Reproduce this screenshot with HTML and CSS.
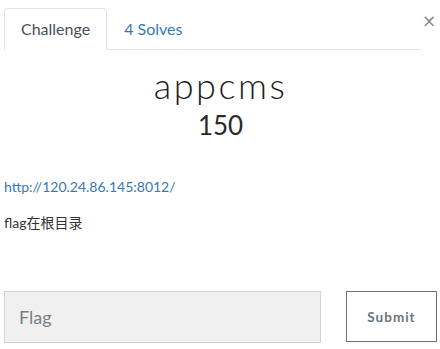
FILE: index.html
```html
<!DOCTYPE html>
<html>
<head>
<meta charset="utf-8">
<link rel="stylesheet" href="styles.css">
</head>
<body>
<div class="modal">
  <div class="header">
    <ul class="tabs">
      <li class="tab active">Challenge</li>
      <li class="tab">4 Solves</li>
    </ul>
    <button class="close">×</button>
  </div>
  <h2 class="title">appcms</h2>
  <h3 class="points">150</h3>
  <p class="desc"><a class="link" href="#">http://120.24.86.145:8012/</a></p>
  <p class="desc text">flag在根目录</p>
  <div class="form">
    <input class="flag" type="text" placeholder="Flag">
    <button class="submit">Submit</button>
  </div>
</div>
</body>
</html>
```

FILE: styles.css
```css
html, body {
  margin: 0;
  padding: 0;
  background: #fff;
}
body {
  font-family: Lato, "Noto Sans CJK SC", sans-serif;
  color: #212529;
}
.modal {
  padding: 8px 3px 0 4px;
}
.header {
  display: flex;
  align-items: flex-start;
}
.tabs {
  flex: 1;
  display: flex;
  list-style: none;
  margin: 0;
  padding: 0;
  border-bottom: 1px solid #dee2e6;
}
.tab {
  font-size: 16px;
  line-height: 24px;
  padding: 8px 16px;
  margin-bottom: -1px;
  border: 1px solid transparent;
  border-radius: 4px 4px 0 0;
  color: #337ab7;
}
.tab.active {
  color: #495057;
  border-color: #dee2e6 #dee2e6 #fff;
  background: #fff;
}
.close {
  width: 16px;
  padding: 0;
  border: 0;
  background: none;
  font-family: "DejaVu Sans", sans-serif;
  font-size: 17px;
  line-height: 20px;
  margin: 3px 0 0 0;
  color: #888;
  text-align: center;
}
.title {
  margin: 13px 0 0;
  text-align: center;
  font-weight: 300;
  font-size: 36px;
  line-height: 44px;
  letter-spacing: 2.5px;
  color: #1e1e1e;
}
.points {
  margin: 0;
  text-align: center;
  font-weight: 400;
  font-size: 26px;
  line-height: 36px;
  color: #2a2a2a;
}
.desc {
  margin: 34px 0 0;
  font-size: 14px;
  line-height: 20px;
}
.desc.text {
  margin-top: 16px;
  font-size: 14px;
  color: #333;
}
.link {
  color: #337ab7;
  text-decoration: none;
}
.form {
  display: flex;
  gap: 25px;
  margin-top: 58px;
}
.flag {
  box-sizing: border-box;
  width: 317px;
  height: 52px;
  margin: 0;
  padding: 0 14px;
  background: #f0f0f0;
  border: 1px solid #ced4da;
  font-family: Lato, sans-serif;
  font-size: 18px;
  color: #495057;
  outline: none;
}
.flag::placeholder {
  color: #7a7f85;
}
.submit {
  box-sizing: border-box;
  width: 91px;
  height: 51px;
  margin: 0;
  background: #fff;
  border: 1px solid #6c757d;
  font-family: Lato, sans-serif;
  font-weight: 700;
  font-size: 13.5px;
  letter-spacing: 1px;
  color: #6c757d;
}
```
